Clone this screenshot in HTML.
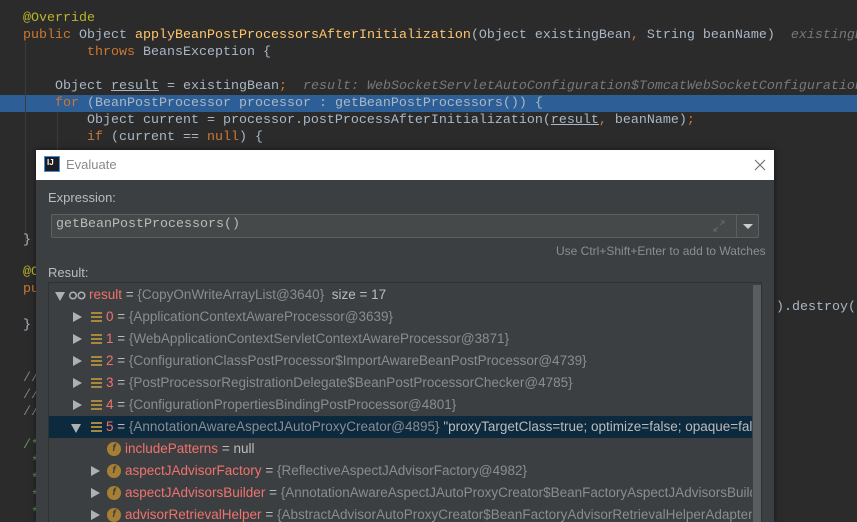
<!DOCTYPE html>
<html><head><meta charset="utf-8"><style>
*{margin:0;padding:0;box-sizing:border-box}
html,body{width:857px;height:522px;overflow:hidden}
body{background:#2b2b2b;position:relative;font-family:"Liberation Sans",sans-serif}
.c{position:absolute;font-family:"Liberation Mono",monospace;font-size:13.33px;line-height:17px;color:#a9b7c6;white-space:pre}
.k{color:#cc7832}.a{color:#bbb529}.m{color:#ffc66d}.h{color:#787878;font-style:italic}.u{text-decoration:underline}.g{color:#629755}
.hl{position:absolute;left:0;top:95px;width:857px;height:17px;background:#2d5e96}
.gl{position:absolute;width:1px;background:#3b3b3b}
#dlg{position:absolute;left:36px;top:150px;width:738px;height:372px;background:#3c3f41;box-shadow:0 0 6px rgba(0,0,0,.5);overflow:hidden}
#tb{position:absolute;left:0;top:0;width:738px;height:30px;background:#fff}
.t{position:absolute;white-space:pre;font-size:13px;color:#bbbbbb}
.row{position:absolute;left:0;width:703px;height:22px;font-size:13.5px;line-height:22px;white-space:pre;color:#bbbbbb;overflow:hidden}
.row>span{position:absolute;top:0}
.n{color:#f0726d}.v{color:#898d90}
.tri{position:absolute;top:6px;width:0;height:0;border-top:5px solid transparent;border-bottom:5px solid transparent;border-left:9px solid #aeb1b3}
.trd{position:absolute;top:8px;width:0;height:0;border-left:5px solid transparent;border-right:5px solid transparent;border-top:9px solid #aeb1b3}
.li{position:absolute;top:6px;width:11px;height:10px;background:repeating-linear-gradient(#a8873e 0 2px,transparent 2px 4px)}
.fi{position:absolute;top:4px;width:14px;height:14px;border-radius:50%;background:#a67f34;color:#3c3f41;font-size:10px;line-height:14px;text-align:center;font-style:italic;font-weight:bold}
</style></head><body>
<div class="hl"></div>
<div class="gl" style="left:25px;top:42px;height:200px"></div>
<div class="gl" style="left:57px;top:112px;height:40px"></div>
<div class="c" style="left:23px;top:10px"><span class="a">@Override</span>
<span class="k">public </span>Object <span class="m">applyBeanPostProcessorsAfterInitialization</span>(Object existingBean<span class="k">, </span>String beanName)  <span class="h">existingBean</span>
        <span class="k">throws </span>BeansException {

    Object <span class="u">result</span> = existingBean<span class="k">;  </span><span class="h">result: WebSocketServletAutoConfiguration$TomcatWebSocketConfiguration</span>
    <span class="k">for </span>(BeanPostProcessor processor : getBeanPostProcessors()) {
        Object current = processor.postProcessAfterInitialization(<span class="u">result</span><span class="k">, </span>beanName)<span class="k">;</span>
        <span class="k">if </span>(current == <span class="k">null</span>) {</div>
<div class="c" style="left:23px;top:232px">}</div>
<div class="c" style="left:23px;top:264px"><span class="a">@O</span>
<span class="k">pu</span></div>
<div class="c" style="left:23px;top:317px">}</div>
<div class="c" style="left:23px;top:370px;color:#808080">//
//
//</div>
<div class="c g" style="left:23px;top:437px">/*
 *
 *
 *
 *</div>
<div class="c" style="left:776px;top:299px">).destroy(</div>

<div id="dlg">
 <div id="tb">
  <div style="position:absolute;left:8px;top:6px;width:16px;height:16px;background:#1d1d1d;border:1px solid #3d8ee8;color:#fff;font-size:8px;font-weight:bold;line-height:11px;padding-left:2px">IJ</div>
  <div class="t" style="left:30px;top:7px;color:#8a8a8a">Evaluate</div>
  <svg style="position:absolute;left:717px;top:8px" width="14" height="14"><path d="M2 2L12 12M12 2L2 12" stroke="#777" stroke-width="1.2"/></svg>
 </div>
 <div class="t" style="left:12px;top:40px">Expression:</div>
 <div style="position:absolute;left:15px;top:64px;width:708px;height:24px;border:1px solid #5e6060;border-radius:2px;background:#45494a"></div>
 <div style="position:absolute;left:700px;top:65px;width:1px;height:22px;background:#5e6060"></div>
 <div style="position:absolute;left:707px;top:74px;border-left:5px solid transparent;border-right:5px solid transparent;border-top:5px solid #ccc"></div>
 <svg style="position:absolute;left:676px;top:69px" width="14" height="14"><path d="M8 6L12 2M9 2H12V5M6 8L2 12M2 9V12H5" stroke="#666" fill="none"/></svg>
 <div class="t" style="left:20px;top:67px;font-family:'Liberation Mono',monospace;font-size:13.33px">getBeanPostProcessors()</div>
 <div class="t" style="left:520px;top:94px;color:#8b8e90;font-size:12px">Use Ctrl+Shift+Enter to add to Watches</div>
 <div class="t" style="left:12px;top:115px">Result:</div>
 <div style="position:absolute;left:12px;top:132px;width:714px;height:250px;border:1px solid #2f3133;background:#3c3f41;overflow:hidden">
  <div class="row" style="top:1px">
   <div class="trd" style="left:6px"></div>
   <svg style="position:absolute;left:20px;top:7px" width="17" height="9"><circle cx="4" cy="4.5" r="3.3" stroke="#aeb1b3" stroke-width="1.5" fill="none"/><circle cx="12.5" cy="4.5" r="3.3" stroke="#aeb1b3" stroke-width="1.5" fill="none"/></svg>
   <span style="left:40px"><span class="n">result</span> = <span class="v">{CopyOnWriteArrayList@3640}</span>  size = 17</span></div>
  <div class="row" style="top:23px"><div class="tri" style="left:24px"></div><div class="li" style="left:42px"></div><span style="left:57px"><span class="n">0</span> = <span class="v">{ApplicationContextAwareProcessor@3639}</span></span></div>
  <div class="row" style="top:45px"><div class="tri" style="left:24px"></div><div class="li" style="left:42px"></div><span style="left:57px"><span class="n">1</span> = <span class="v">{WebApplicationContextServletContextAwareProcessor@3871}</span></span></div>
  <div class="row" style="top:67px"><div class="tri" style="left:24px"></div><div class="li" style="left:42px"></div><span style="left:57px"><span class="n">2</span> = <span class="v">{ConfigurationClassPostProcessor$ImportAwareBeanPostProcessor@4739}</span></span></div>
  <div class="row" style="top:89px"><div class="tri" style="left:24px"></div><div class="li" style="left:42px"></div><span style="left:57px"><span class="n">3</span> = <span class="v">{PostProcessorRegistrationDelegate$BeanPostProcessorChecker@4785}</span></span></div>
  <div class="row" style="top:111px"><div class="tri" style="left:24px"></div><div class="li" style="left:42px"></div><span style="left:57px"><span class="n">4</span> = <span class="v">{ConfigurationPropertiesBindingPostProcessor@4801}</span></span></div>
  <div class="row" style="top:133px;background:#0d293e"><div class="trd" style="left:22px"></div><div class="li" style="left:42px"></div><span style="left:57px"><span class="n">5</span> = <span class="v">{AnnotationAwareAspectJAutoProxyCreator@4895}</span> "proxyTargetClass=true; optimize=false; opaque=false"</span></div>
  <div class="row" style="top:155px"><div class="fi" style="left:58px">f</div><span style="left:76px"><span class="n">includePatterns</span> = null</span></div>
  <div class="row" style="top:177px"><div class="tri" style="left:42px"></div><div class="fi" style="left:58px">f</div><span style="left:76px"><span class="n">aspectJAdvisorFactory</span> = <span class="v">{ReflectiveAspectJAdvisorFactory@4982}</span></span></div>
  <div class="row" style="top:199px"><div class="tri" style="left:42px"></div><div class="fi" style="left:58px">f</div><span style="left:76px"><span class="n">aspectJAdvisorsBuilder</span> = <span class="v">{AnnotationAwareAspectJAutoProxyCreator$BeanFactoryAspectJAdvisorsBuilderAdapter}</span></span></div>
  <div class="row" style="top:221px"><div class="tri" style="left:42px"></div><div class="fi" style="left:58px">f</div><span style="left:76px"><span class="n">advisorRetrievalHelper</span> = <span class="v">{AbstractAdvisorAutoProxyCreator$BeanFactoryAdvisorRetrievalHelperAdapter}</span></span></div>
  <div style="position:absolute;left:704px;top:2px;width:8px;height:250px;background:#5a5d5f"></div>
 </div>
</div>
</body></html>
